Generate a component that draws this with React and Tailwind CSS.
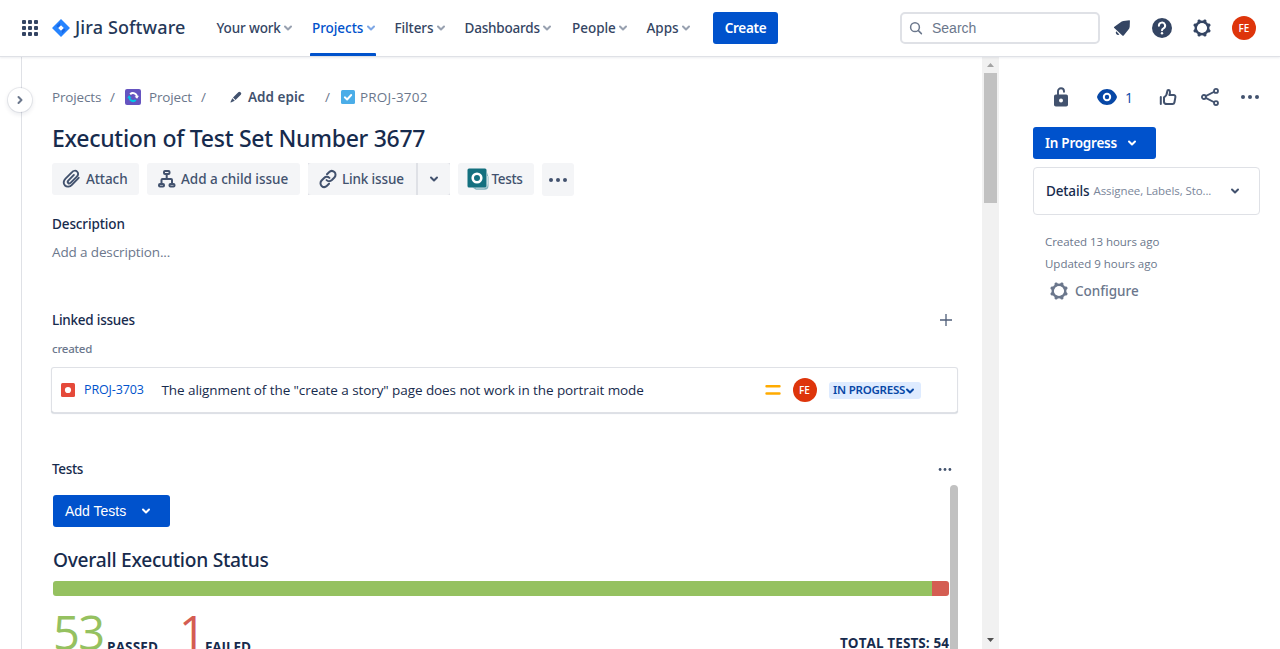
const Chevron = ({ className = "" }) => (
  <svg viewBox="0 0 10 8" className={`h-2 w-2.5 shrink-0 ${className}`} fill="none" stroke="currentColor" strokeWidth="2" strokeLinecap="round" strokeLinejoin="round">
    <path d="M2 2.5 5 5.5 8 2.5" />
  </svg>
);

const Gear = ({ className = "" }) => (
  <svg viewBox="0 0 20 20" className={`h-5 w-5 shrink-0 ${className}`} fill="none" stroke="currentColor">
    <circle cx="10" cy="10" r="6.3" strokeWidth="2.4" />
    <g strokeWidth="3.4" strokeLinecap="round">
      {[22.5, 67.5, 112.5, 157.5, 202.5, 247.5, 292.5, 337.5].map((a) => (
        <path key={a} d="M10 2.6v.5" transform={`rotate(${a} 10 10)`} />
      ))}
    </g>
  </svg>
);

const Dots = ({ className = "" }) => (
  <svg viewBox="0 0 20 4" className={`shrink-0 ${className}`} fill="currentColor">
    <circle cx="3" cy="2" r="2" />
    <circle cx="10" cy="2" r="2" />
    <circle cx="17" cy="2" r="2" />
  </svg>
);

const Avatar = ({ className = "" }) => (
  <span className={`flex h-6 w-6 shrink-0 items-center justify-center rounded-full bg-[#de350b] text-[10px] font-semibold leading-none text-white ${className}`}>FE</span>
);

const nav = [
  { label: "Your work", box: "w-[95.5px]", text: "tracking-[-0.15px]" },
  { label: "Projects", box: "w-[82.5px]", text: "tracking-[-0.05px]", active: true },
  { label: "Filters", box: "w-[70px]", text: "tracking-[-0.1px]" },
  { label: "Dashboards", box: "w-[107.5px]", text: "tracking-[-0.2px]" },
  { label: "People", box: "w-[74.5px]", text: "tracking-[-0.03px]" },
  { label: "Apps", box: "w-[66.5px]", text: "tracking-[0px]" },
];

function Header() {
  return (
    <header className="relative z-10 flex h-14 shrink-0 items-center bg-white pl-[22px] pr-6 text-[#344563] shadow-[0_1px_0_#dfe1e6,0_2px_2px_rgba(9,30,66,0.08)]">
      <svg viewBox="0 0 16 16" className="h-4 w-4 shrink-0" fill="currentColor">
        {[0, 6, 12].map((y) => [0, 6, 12].map((x) => <rect key={`${x}-${y}`} x={x} y={y} width="4" height="4" rx="1" />))}
      </svg>
      <svg viewBox="0 0 18 18" className="ml-[13.5px] h-[18px] w-[18px] shrink-0">
        <path d="M9 0 .5 8.4a.9.9 0 0 0 0 1.2L9 18l8.500-8.400a.9.9 0 0 0 0-1.200z" fill="#2684ff" />
        <path d="M9 2.200c-1.400 1.400-1.400 3.200 0 4.500L6.400 9 4.300 6.900z" fill="#1868e6" />
        <path d="M9 15.800c1.400-1.400 1.400-3.200 0-4.500L11.600 9l2.100 2.100z" fill="#1868e6" />
        <path d="M9 6.200 11.800 9 9 11.800 6.200 9z" fill="#fff" />
      </svg>
      <div className="ml-[5.500px] w-[141.500px] shrink-0 pb-px font-['Noto_Sans',sans-serif] text-[18px] font-medium tracking-[0.120px] text-[#253858]">Jira Software</div>
      <nav className="flex h-full items-center font-['Noto_Sans',sans-serif] text-[13.500px] font-medium">
        {nav.map((n) => (
          <div key={n.label} className={`relative flex h-full shrink-0 items-center whitespace-nowrap ${n.box} ${n.active ? "text-[#0052cc]" : ""}`}>
            <span className={n.text}>{n.label}</span>
            <Chevron className="ml-[2.500px] opacity-50" />
            {n.active && <span className="absolute bottom-0 -left-0.5 h-[3px] w-[66px] rounded-t-[1px] bg-[#0052cc]" />}
          </div>
        ))}
      </nav>
      <button className="h-8 w-[65px] shrink-0 rounded-[3px] bg-[#0052cc] font-['Noto_Sans',sans-serif] text-[13.500px] font-semibold tracking-[-0.300px] text-white">Create</button>
      <div className="ml-auto flex h-8 w-[200px] shrink-0 items-center rounded-[5px] border-2 border-[#dfe1e6] bg-white pl-[7px] text-[#6b778c]">
        <svg viewBox="0 0 14 14" className="h-3.5 w-3.5" fill="none" stroke="currentColor" strokeWidth="1.500" strokeLinecap="round">
          <circle cx="6" cy="6.200" r="4.400" />
          <path d="m9.400 9.600 3 3" />
        </svg>
        <span className="ml-[9px] font-['Liberation_Sans',sans-serif] text-[14px]">Search</span>
      </div>
      <svg viewBox="0 0 18 18" className="ml-[13px] h-[18px] w-[18px] shrink-0" fill="currentColor">
        <path d="M16.500 1.200c.5.300.5.800.4 1.200l-.2 5.300c-.1 1.200-.6 2.300-1.400 3.100l-4.600 5.600c-.4.500-1 .5-1.400.1L1.300 9.100c-.5-.5-.4-1.100.1-1.400L7.300 3.500C8.200 2.600 9.200 2.100 10.400 2z" />
        <path d="M3.200 12.200a2.300 2.300 0 0 0 3.200 3.200z" />
      </svg>
      <svg viewBox="0 0 20 20" className="ml-[21px] h-5 w-5 shrink-0">
        <circle cx="10" cy="10" r="10" fill="currentColor" />
        <path d="M6.900 7.700a3.100 3.100 0 1 1 4.600 2.700c-.9.500-1.500 1-1.500 1.900" fill="none" stroke="#fff" strokeWidth="2" strokeLinecap="round" />
        <circle cx="10" cy="15.300" r="1.200" fill="#fff" />
      </svg>
      <Gear className="ml-5" />
      <Avatar className="ml-5" />
    </header>
  );
}

function Breadcrumbs() {
  return (
    <div className="flex h-5 items-center whitespace-nowrap text-[13.500px] text-[#6b778c]">
      <span className="w-[58px] tracking-[-0.150px]">Projects</span>
      <span className="w-[15px]">/</span>
      <svg viewBox="0 0 16 16" className="h-4 w-4 shrink-0">
        <rect width="16" height="16" rx="2" fill="#6554c0" />
        <g fill="none" strokeWidth="2">
          <path d="M4.200 8.500a4 4 0 0 0 6.600 2.600" stroke="#00c7e6" />
          <path d="M12 7.800a4 4 0 0 0-6.800-2.600" stroke="#fff" />
        </g>
        <path d="M2.200 9.200 4 6.300l2.700 2.400z" fill="#00c7e6" />
        <path d="M14 6.800 12.100 9.800 9.600 7.500z" fill="#fff" />
      </svg>
      <span className="ml-2 w-[52px] tracking-[-0.150px]">Project</span>
      <span className="w-[29px]">/</span>
      <svg viewBox="0 0 12 12" className="h-3 w-3 shrink-0" fill="#42526e">
        <path d="M8.300 1.200a1.500 1.500 0 0 1 2.100 0l.4.400a1.500 1.500 0 0 1 0 2.100L5.500 9 3 6.500zM2.300 7.200 4.800 9.700.9 11.400a.3.300 0 0 1-.4-.4z" />
      </svg>
      <span className="ml-1.5 w-[77px] font-['Noto_Sans',sans-serif] font-semibold tracking-[0.020px] text-[#42526e]">Add epic</span>
      <span className="w-4">/</span>
      <svg viewBox="0 0 14 14" className="h-3.5 w-3.5 shrink-0">
        <rect width="14" height="14" rx="1.500" fill="#4bade8" />
        <path d="m3.800 7.300 2.300 2.200L10.200 5" fill="none" stroke="#fff" strokeWidth="1.900" strokeLinecap="round" strokeLinejoin="round" />
      </svg>
      <span className="ml-[5px] tracking-[0.200px]">PROJ-3702</span>
    </div>
  );
}

const actionButton = "flex h-8 shrink-0 items-center rounded-[3px] bg-[#f4f5f7]";

function Actions() {
  return (
    <div className="mt-[9px] flex h-8 gap-2 whitespace-nowrap font-['Noto_Sans',sans-serif] text-[13.500px] font-medium text-[#42526e]">
      <div className={`${actionButton} w-[87px] pl-2.5`}>
        <svg viewBox="0 0 20 20" className="h-5 w-5 shrink-0" fill="none" stroke="currentColor" strokeWidth="1.900" strokeLinecap="round">
          <path d="M16.700 8.800 9.900 15.800C8 17.700 5 18.400 3 16.500 1 14.600 1.400 11.700 3.500 9.600L9.800 3.300c1.500-1.600 3.800-2.100 5.300-.7 1.600 1.500 1.200 3.600-.3 5.100l-6 6c-.8.800-1.900 1-2.600.3-.8-.8-.5-1.900.3-2.700l5.400-5.400" />
        </svg>
        <span className="ml-1 tracking-[-0.080px]">Attach</span>
      </div>
      <div className={`${actionButton} w-[153px] pl-2.5`}>
        <svg viewBox="0 0 20 20" className="h-5 w-5 shrink-0" fill="none" stroke="currentColor" strokeWidth="2">
          <rect x="7" y="2" width="5.500" height="3" rx="1" />
          <rect x="2" y="15" width="5" height="2.500" rx="1" />
          <rect x="12.500" y="15" width="5" height="2.500" rx="1" />
          <path d="M9.700 5V10M4.500 15v-4a1 1 0 0 1 1-1h8.500a1 1 0 0 1 1 1v4" />
        </svg>
        <span className="ml-1 tracking-[-0.020px]">Add a child issue</span>
      </div>
      <div className="flex gap-0.5 bg-[#dfe1e6]">
        <div className={`${actionButton} w-[108px] rounded-r-none pl-2.5`}>
          <svg viewBox="0 0 20 20" className="h-5 w-5 shrink-0" fill="none" stroke="currentColor" strokeWidth="2" strokeLinecap="round">
            <path d="m9 5.300 2-2c1.600-1.600 3.900-1.600 5.400-.2s1.500 3.900 0 5.400l-2.500 2.500c-1.600 1.500-3.900 1.500-5.300.1" />
            <path d="m11 14.700-2 2c-1.600 1.600-3.900 1.600-5.400.2s-1.500-3.900 0-5.400L6.100 9c1.600-1.500 3.900-1.500 5.300-.1" />
          </svg>
          <span className="ml-1 tracking-[-0.150px]">Link issue</span>
        </div>
        <div className={`${actionButton} w-8 justify-center rounded-l-none`}>
          <Chevron />
        </div>
      </div>
      <div className={`${actionButton} w-[76px] pl-[9px]`}>
        <svg viewBox="0 0 22 22" className="h-[22px] w-[22px] shrink-0">
          <path d="M20 4.500V17a2.500 2.500 0 0 1-2.500 2.500H5.500L9 21.700h8.500a4 4 0 0 0 4-4V9z" fill="#7fb0bb" />
          <path d="M20.500 8v8.500a3.500 3.500 0 0 1-3.500 3.500H9" fill="none" stroke="#eef4f5" strokeWidth=".7" />
          <rect x=".5" y=".5" width="19" height="19" rx="1.500" fill="#13707f" />
          <circle cx="10" cy="10" r="4.300" fill="none" stroke="#fff" strokeWidth="2.600" />
        </svg>
        <span className="ml-[2.500px] tracking-[-0.350px]">Tests</span>
      </div>
      <div className={`${actionButton} h-[33px] w-8 justify-center`}>
        <Dots className="h-1 w-5" />
      </div>
    </div>
  );
}

function LinkedIssue() {
  return (
    <div className="mt-2 -ml-px flex h-[46px] w-[907px] shrink-0 items-center whitespace-nowrap rounded-[3px] bg-white pl-2.5 shadow-[inset_0_0_0_1px_#dfe1e6,inset_0_-1px_0_#b3bac5,0_1px_1px_rgba(9,30,66,0.15)]">
      <svg viewBox="0 0 14 14" className="h-3.5 w-3.5 shrink-0">
        <rect width="14" height="14" rx="1.500" fill="#e5493a" />
        <circle cx="7" cy="7" r="3.100" fill="#fff" />
      </svg>
      <span className="ml-[9px] w-[77.500px] text-[12.500px] tracking-[-0.120px] text-[#0052cc]">PROJ-3703</span>
      <span className="w-[603px] text-[13.500px] tracking-[-0.080px] text-[#172b4d]">The alignment of the "create a story" page does not work in the portrait mode</span>
      <svg viewBox="0 0 16 12" className="h-3 w-4 shrink-0" stroke="#ffab00" strokeWidth="2.400" strokeLinecap="round">
        <path d="M1.500 2.300h13M1.500 9.500h13" />
      </svg>
      <Avatar className="ml-3" />
      <span className="ml-3 flex h-[17px] w-[92px] items-center rounded-[3px] bg-[#deebff] pl-[4.500px] font-['Noto_Sans',sans-serif] text-[11.500px] font-semibold tracking-[-0.230px] text-[#0747a6]">
        <span className="w-[71px]">IN PROGRESS</span>
        <Chevron className="ml-px mt-px" />
      </span>
    </div>
  );
}

function TestsPanel() {
  return (
    <div className="mt-1.5 flex min-h-0 flex-1">
      <div className="w-[898px] overflow-hidden pl-px pt-2.5">
        <button className="flex h-8 w-[117px] items-center rounded-[3px] bg-[#0052cc] pl-3 font-['Liberation_Sans',sans-serif] text-[14px] text-white">
          Add Tests
          <Chevron className="ml-[15px]" />
        </button>
        <h2 className="mt-[21px] h-6 font-['Noto_Sans',sans-serif] text-[19.200px] font-medium leading-6 tracking-[-0.280px]">Overall Execution Status</h2>
        <div className="mt-[9px] flex h-[15px] w-[896px] overflow-hidden rounded-[3px]">
          <div className="flex-1 bg-[#95c160]" />
          <div className="w-[17px] bg-[#d45d52]" />
        </div>
        <div className="mt-4 flex w-[896px] whitespace-nowrap text-[13.500px] font-bold leading-5">
          <span className="w-[54px] text-[47px] font-normal leading-10 tracking-[-1.500px] text-[#95c160]">53</span>
          <span className="mt-[25px] w-[72px] tracking-[0.150px]">PASSED</span>
          <span className="w-[26px] text-[47px] font-normal leading-10 text-[#d45d52]">1</span>
          <span className="mt-[25px] tracking-[-0.100px]">FAILED</span>
          <span className="ml-auto mt-[21px] tracking-[0.090px]">TOTAL TESTS: 54</span>
        </div>
      </div>
      <div className="w-2 rounded-t-full bg-[#c1c1c1]" />
    </div>
  );
}

const sectionTitle = "font-['Noto_Sans',sans-serif] font-medium leading-5";

function Issue() {
  return (
    <main className="flex w-[960px] shrink-0 flex-col pl-[30px] pt-[31px] text-[13.500px] text-[#172b4d]">
      <Breadcrumbs />
      <h1 className="mt-[15px] h-8 shrink-0 whitespace-nowrap font-['Noto_Sans',sans-serif] text-[23px] font-medium leading-8 tracking-[-0.280px]">Execution of Test Set Number 3677</h1>
      <Actions />
      <h2 className={`${sectionTitle} mt-[19px] h-5 tracking-[-0.120px]`}>Description</h2>
      <p className="mt-2 h-5 leading-5 tracking-[-0.130px] text-[#6b778c]">Add a description...</p>
      <div className="mt-12 flex h-5 w-[900px] items-center justify-between">
        <h2 className={`${sectionTitle} tracking-[-0.250px]`}>Linked issues</h2>
        <svg viewBox="0 0 12 12" className="h-3 w-3" stroke="#505f79" strokeWidth="1.300">
          <path d="M6 0v12M0 6h12" />
        </svg>
      </div>
      <h3 className="mt-[9px] h-5 font-['Noto_Sans',sans-serif] text-[11.500px] font-medium leading-5 tracking-[-0.220px] text-[#6b778c]">created</h3>
      <LinkedIssue />
      <div className="mt-[46px] flex h-5 w-[900px] items-center justify-between">
        <h2 className={`${sectionTitle} tracking-[-0.350px]`}>Tests</h2>
        <Dots className="h-[3px] w-3.5 text-[#42526e]" />
      </div>
      <TestsPanel />
    </main>
  );
}

function PageScrollbar() {
  return (
    <div className="flex w-[17px] shrink-0 flex-col items-center justify-between bg-[#f1f1f1]">
      <div className="flex flex-col items-center">
        <svg viewBox="0 0 17 17" className="h-[17px] w-[17px]" fill="#a3a3a3"><path d="M5 11h7L8.500 7z" /></svg>
        <div className="h-[130px] w-[13px] bg-[#c1c1c1]" />
      </div>
      <svg viewBox="0 0 17 17" className="h-[17px] w-[17px]" fill="#505050"><path d="M5 6h7l-3.500 4z" /></svg>
    </div>
  );
}

function Sidebar() {
  return (
    <aside className="flex flex-1 flex-col whitespace-nowrap pl-[34px] pt-[31px] text-[#42526e]">
      <div className="flex h-5 items-center">
        <svg viewBox="0 0 16 20" className="ml-5 h-5 w-4 shrink-0">
          <path d="M5 8V4.200a3 3 0 0 1 6 0v.5" fill="none" stroke="currentColor" strokeWidth="1.900" strokeLinecap="round" />
          <rect x="1" y="7.500" width="14" height="12" rx="1.800" fill="currentColor" />
          <circle cx="8" cy="13.400" r="2" fill="#fff" />
        </svg>
        <svg viewBox="0 0 20 16" className="ml-7 h-4 w-5 shrink-0">
          <path d="M10 0c4.500 0 8 2.800 9.700 7a2.600 2.600 0 0 1 0 2C18 13.200 14.500 16 10 16S2 13.200.3 9a2.600 2.600 0 0 1 0-2C2 2.800 5.500 0 10 0z" fill="#0747a6" />
          <circle cx="10" cy="8" r="3.200" fill="none" stroke="#fff" strokeWidth="2" />
        </svg>
        <span className="ml-2 w-[34px] text-[14px] text-[#0747a6]">1</span>
        <svg viewBox="0 0 18 18" className="h-[18px] w-[18px] shrink-0" fill="none" stroke="currentColor" strokeWidth="2" strokeLinecap="round" strokeLinejoin="round">
          <path d="M1.800 9v7" />
          <path d="M5 9.300C7 8.200 8 6.500 8.200 3.500 8.300 1.700 10.600 1.600 10.900 3.500c.2 1.300-.1 2.500-.5 3.600h4.300c1.100 0 1.900.9 1.700 2l-1 5.400c-.2 1-.9 1.600-1.900 1.600H8.200C6.500 16.100 5 15.500 5 14z" />
        </svg>
        <svg viewBox="0 0 18 18" className="ml-6 h-[18px] w-[18px] shrink-0" fill="none" stroke="currentColor" strokeWidth="1.800">
          <circle cx="2.900" cy="9" r="2" />
          <circle cx="15" cy="2.900" r="2" />
          <circle cx="15" cy="15.100" r="2" />
          <path d="m4.700 8.100 8.500-4.300M4.700 9.900l8.500 4.300" />
        </svg>
        <Dots className="ml-[21px] h-1 w-5" />
      </div>
      <button className="mt-5 flex h-8 w-[123px] shrink-0 items-center rounded-[3px] bg-[#0052cc] pl-3 font-['Noto_Sans',sans-serif] text-[13.500px] font-semibold tracking-[-0.250px] text-white">
        <span className="w-[82px] text-left">In Progress</span>
        <Chevron />
      </button>
      <div className="mt-2 flex h-12 w-[227px] shrink-0 items-center rounded-[4px] border border-[#dfe1e6] pl-3">
        <span className="w-[47.500px] font-['Noto_Sans',sans-serif] text-[13.500px] font-medium tracking-[-0.150px] text-[#172b4d]">Details</span>
        <span className="w-[136.500px] text-[11.500px] tracking-[-0.090px] text-[#7a869a]">Assignee, Labels, Sto...</span>
        <Chevron />
      </div>
      <p className="ml-3 mt-4 text-[11.500px] leading-[22px] tracking-[-0.050px] text-[#6b778c]">Created 13 hours ago</p>
      <p className="ml-3 text-[11.500px] leading-[22px] tracking-[-0.020px] text-[#6b778c]">Updated 9 hours ago</p>
      <div className="ml-4 mt-1 flex h-6 items-center text-[#6b778c]">
        <Gear />
        <span className="ml-1.5 font-['Noto_Sans',sans-serif] text-[13.500px] font-medium tracking-[0px]">Configure</span>
      </div>
    </aside>
  );
}

export default function App() {
  return (
    <div className="flex h-[649px] w-[1280px] flex-col overflow-hidden bg-white font-['Open_Sans','Noto_Sans',sans-serif]">
      <Header />
      <div className="flex min-h-0 flex-1">
        <div className="relative w-[22px] shrink-0 border-r border-[#dfe1e6]">
          <button className="absolute left-2 top-8 flex h-6 w-6 items-center justify-center rounded-full bg-white text-[#6b778c] shadow-[0_0_0_1px_rgba(9,30,66,0.08),0_2px_4px_1px_rgba(9,30,66,0.08)]">
            <Chevron className="-rotate-90" />
          </button>
        </div>
        <Issue />
        <PageScrollbar />
        <Sidebar />
      </div>
    </div>
  );
}
